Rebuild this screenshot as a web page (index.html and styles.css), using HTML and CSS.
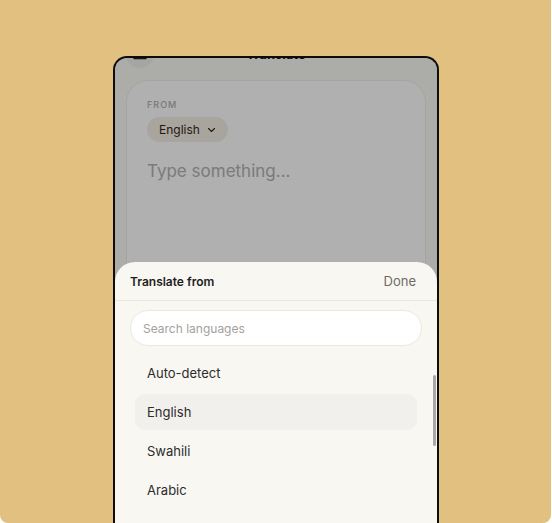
FILE: index.html
```html
<!DOCTYPE html>
<html>
<head>
<meta charset="utf-8">
<link rel="stylesheet" href="styles.css">
</head>
<body>
<div class="stage">
  <div class="phone">
    <div class="screen">
      <div class="app">
        <header class="topbar">
          <button class="menu-btn" aria-label="Menu">
            <svg width="14" height="12" viewBox="0 0 14 12"><path d="M1 1.5h12M1 6h12M1 10.5h12" stroke="#1f1f1f" stroke-width="1.4" stroke-linecap="round"/></svg>
          </button>
          <div class="title">Translate</div>
          <div class="spacer"></div>
        </header>
        <section class="card">
          <div class="label">FROM</div>
          <div class="pill">English
            <svg width="9" height="6" viewBox="0 0 9 6"><path d="M1.5 1.5l3 3 3-3" fill="none" stroke="#3a1f14" stroke-width="1.1" stroke-linecap="round" stroke-linejoin="round"/></svg>
          </div>
          <div class="input-ph">Type something...</div>
        </section>
      </div>
      <div class="overlay"></div>
      <div class="sheet">
        <div class="sheet-head">
          <span class="sheet-title">Translate from</span>
          <span class="done">Done</span>
        </div>
        <div class="search">Search languages</div>
        <ul class="list">
          <li class="item">Auto-detect</li>
          <li class="item selected">English</li>
          <li class="item">Swahili</li>
          <li class="item">Arabic</li>
        </ul>
        <div class="scrollbar"></div>
      </div>
    </div>
  </div>
</div>
</body>
</html>
```

FILE: styles.css
```css
* { box-sizing: border-box; }
html, body { margin: 0; padding: 0; background: #ffffff; }
body { font-family: Inter, "Noto Sans", sans-serif; }

.stage {
  width: 551px;
  height: 523px;
  background: #e2c07f;
  border-radius: 0 0 8px 8px;
  overflow: hidden;
  padding: 56px 0 0 113px;
}

.phone {
  width: 326px;
  height: 520px;
  border: 2px solid #0d0d0d;
  border-bottom: none;
  border-radius: 14px 14px 0 0;
  overflow: hidden;
  background: #faf9f4;
}

.screen {
  position: relative;
  width: 100%;
  height: 100%;
  overflow: hidden;
}

.app {
  margin-top: -26px;
  padding: 0 11px;
}

.topbar {
  height: 44px;
  display: flex;
  align-items: center;
  justify-content: space-between;
}
.menu-btn {
  width: 28px;
  height: 28px;
  border-radius: 50%;
  border: none;
  background: #f1efe9;
  display: flex;
  align-items: center;
  justify-content: center;
  padding: 0;
}
.title {
  font-size: 13px;
  font-weight: 700;
  color: #111;
}
.spacer { width: 28px; }

.card {
  margin-top: 4px;
  height: 400px;
  background: #ffffff;
  border: 1px solid #f0eee8;
  border-radius: 22px;
  padding: 18px 20px;
}
.label {
  font-size: 9px;
  letter-spacing: 1px;
  color: #b0b0b0;
  font-weight: 500;
}
.pill {
  margin-top: 7px;
  display: inline-flex;
  align-items: center;
  gap: 7px;
  height: 25px;
  padding: 0 12px;
  border-radius: 13px;
  background: #f3efe6;
  color: #3a1f14;
  font-size: 12px;
  font-weight: 400;
}
.input-ph {
  margin-top: 19px;
  font-size: 17px;
  color: #b2b2b2;
}

.overlay {
  position: absolute;
  inset: 0;
  background: rgba(0, 0, 0, 0.31);
}

.sheet {
  position: absolute;
  left: 0;
  right: 0;
  top: 204px;
  bottom: 0;
  background: #f8f7f2;
  border-radius: 20px 20px 0 0;
}
.sheet-head {
  height: 39px;
  display: flex;
  align-items: center;
  justify-content: space-between;
  padding: 0 21px 0 15px;
  border-bottom: 1px solid #e9e6df;
}
.sheet-title {
  font-size: 12px;
  font-weight: 600;
  color: #1e1e1e;
}
.done {
  font-size: 13px;
  color: #6e6a65;
}
.search {
  margin: 9px 15px 0;
  height: 36px;
  border-radius: 18px;
  background: #ffffff;
  border: 1px solid #ebe8e1;
  display: flex;
  align-items: center;
  padding: 0 12px;
  font-size: 12px;
  color: #a3a19d;
}
.list {
  list-style: none;
  margin: 9px 0 0;
  padding: 0 20px;
  display: flex;
  flex-direction: column;
  gap: 3px;
}
.item {
  height: 36px;
  display: flex;
  align-items: center;
  padding: 0 12px;
  border-radius: 10px;
  font-size: 13px;
  color: #2c2c2c;
}
.item.selected { background: #f1f0ec; }

.scrollbar {
  position: absolute;
  right: 1px;
  top: 113px;
  width: 3px;
  height: 71px;
  border-radius: 2px;
  background: #a9a8a5;
}
```
